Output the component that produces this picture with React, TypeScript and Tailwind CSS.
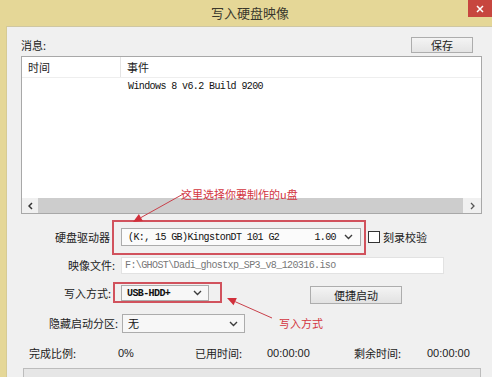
const sans = "font-['Noto_Sans_CJK_SC','Noto_Sans',sans-serif]";
const mono = "font-['Liberation_Mono','Noto_Sans_CJK_SC',monospace] text-[10px] tracking-[-0.6px]";

function Chevron() {
  return (
    <svg width="9" height="6" viewBox="0 0 9 6" className="shrink-0">
      <path d="M1 1 L4.5 4.5 L8 1" fill="none" stroke="#3c3c3c" strokeWidth="1.4" />
    </svg>
  );
}

function Label({ children, className = 'w-[108px]' }: { children: React.ReactNode; className?: string }) {
  return (
    <div className={`shrink-0 text-right text-[11px] text-[#222] leading-none ${className}`}>
      {children}
    </div>
  );
}

export default function App() {
  return (
    <div className={`relative w-[492px] h-[377px] overflow-hidden bg-[#e5d797] flex flex-col ${sans}`}>
      {/* Title bar */}
      <div className="relative h-[26px] shrink-0 flex items-center justify-center">
        <span className="text-[13px] text-[#3a382c] ml-[8px]">写入硬盘映像</span>
        <div className="absolute right-0 top-0 w-[24px] h-[17px] bg-[#c7463f] flex items-center justify-center">
          <svg width="8" height="8" viewBox="0 0 8 8">
            <path d="M1 1 L7 7 M7 1 L1 7" stroke="#fff" strokeWidth="1.5" />
          </svg>
        </div>
      </div>

      <div className="flex-1 flex">
        <div className="w-[7px] shrink-0 border-r border-[#d6cb95]" />
        <div className="flex-1 bg-[#f0f0f0] flex flex-col border-t border-[#cfc7a2]">
          {/* Top row */}
          <div className="flex items-center mt-[10px] pl-[14px] pr-[19px] h-[16px]">
            <span className="text-[11px] text-[#222]">消息:</span>
            <button className="ml-auto w-[62px] h-[16px] border border-[#adadad] bg-gradient-to-b from-[#f4f4f4] to-[#e4e4e4] text-[11px] leading-none text-[#222]">
              保存
            </button>
          </div>

          {/* Message list */}
          <div className="mt-[3px] ml-[14px] w-[461px] h-[158px] border border-[#a8a8a8] bg-white flex flex-col">
            <div className="h-[21px] flex border-b border-[#eeeeee] text-[11px] text-[#222]">
              <div className="w-[99px] pl-[6px] flex items-center border-r border-[#e4e4e4]">时间</div>
              <div className="pl-[6px] flex items-center">事件</div>
            </div>
            <div className="h-[16px] flex items-center">
              <div className="w-[99px]" />
              <div className={`pl-[7px] text-[#111] ${mono}`}>Windows 8 v6.2 Build 9200</div>
            </div>
            <div className="flex-1" />
            <div className="h-[15px] flex bg-[#f0f0f0]">
              <div className="w-[16px] flex items-center justify-center">
                <svg width="5" height="8" viewBox="0 0 5 8">
                  <path d="M4 1 L1 4 L4 7" fill="none" stroke="#333" strokeWidth="1.5" />
                </svg>
              </div>
              <div className="flex-1 bg-[#cdcdcd]" />
              <div className="w-[18px] flex items-center justify-center">
                <svg width="5" height="8" viewBox="0 0 5 8">
                  <path d="M1 1 L4 4 L1 7" fill="none" stroke="#555" strokeWidth="1.3" />
                </svg>
              </div>
            </div>
          </div>

          {/* Drive row */}
          <div className="flex items-center mt-[14px] h-[18px]">
            <Label className="w-[103px]">硬盘驱动器</Label>
            <div className="ml-[11px] w-[240px] h-[18px] border border-[#acacac] bg-[#fbfbfb] flex items-center pl-[6px] pr-[7px]">
              <span className={`text-[#111] ${mono}`}>(K:, 15 GB)KingstonDT 101 G2</span>
              <span className={`ml-auto mr-[8px] text-[#111] ${mono}`}>1.00</span>
              <Chevron />
            </div>
            <div className="ml-[7px] w-[12px] h-[12px] border border-[#333] bg-white" />
            <span className="ml-[3px] text-[11px] text-[#222]">刻录校验</span>
          </div>

          {/* Image file row */}
          <div className="flex items-center mt-[11px] h-[17px]">
            <Label>映像文件:</Label>
            <div className="ml-[6px] w-[323px] h-[17px] border border-[#e2e2e2] bg-white flex items-center pl-[3px]">
              <span className={`text-[#777] ${mono}`}>F:\GHOST\Dadi_ghostxp_SP3_v8_120316.iso</span>
            </div>
          </div>

          {/* Write mode row */}
          <div className="flex items-start mt-[11px] h-[19px]">
            <Label className="w-[104px] mt-[3px]">写入方式:</Label>
            <div className="ml-[10px] w-[88px] h-[16px] border border-[#acacac] bg-[#f7f7f7] flex items-center pl-[5px] pr-[6px]">
              <span className={`text-[#111] font-bold ${mono}`}>USB-HDD+</span>
              <span className="ml-auto">
                <Chevron />
              </span>
            </div>
            <button className="ml-[101px] mt-[1px] w-[92px] h-[18px] border border-[#adadad] bg-gradient-to-b from-[#f4f4f4] to-[#e2e2e2] text-[11px] leading-none text-[#222]">
              便捷启动
            </button>
          </div>

          {/* Hidden partition row */}
          <div className="flex items-center mt-[10px] h-[19px]">
            <Label className="w-[111px]">隐藏启动分区:</Label>
            <div className="ml-[4px] w-[123px] h-[19px] border border-[#acacac] bg-[#f7f7f7] flex items-center pl-[5px] pr-[6px]">
              <span className="text-[11px] text-[#111]">无</span>
              <span className="ml-auto">
                <Chevron />
              </span>
            </div>
          </div>

          {/* Stats */}
          <div className="flex items-center mt-[13px] h-[14px] pl-[22px] text-[11px] text-[#222]">
            <span className="w-[89px]">完成比例:</span>
            <span className="w-[77px] font-['Liberation_Sans',sans-serif]">0%</span>
            <span className="w-[72px]">已用时间:</span>
            <span className="w-[87px] font-['Liberation_Sans',sans-serif]">00:00:00</span>
            <span className="w-[73px]">剩余时间:</span>
            <span className="font-['Liberation_Sans',sans-serif]">00:00:00</span>
          </div>

          {/* Progress bar */}
          <div className="mt-[8px] ml-[16px] w-[458px] h-[20px] border border-[#bcbcbc] bg-[#e6e6e6]" />
        </div>
      </div>

      {/* Red annotations */}
      <div className="absolute left-[112px] top-[220px] w-[254px] h-[35px] border-2 border-[#d1525d]" />
      <div className="absolute left-[113px] top-[282px] w-[109px] h-[21px] border-2 border-[#d1525d]" />
      <span className="absolute left-[181px] top-[186px] text-[11px] text-[#d3363f]">这里选择你要制作的u盘</span>
      <span className="absolute left-[279px] top-[315px] text-[11px] text-[#d3363f]">写入方式</span>
      <svg className="absolute left-0 top-0 pointer-events-none" width="492" height="377">
        <line x1="185" y1="193" x2="140.9" y2="217.6" stroke="#c9404a" strokeWidth="1" />
        <polygon points="133,222 142.8,221.1 138.9,214.1" fill="#d1303b" />
        <line x1="272" y1="318" x2="235.2" y2="301.7" stroke="#c9404a" strokeWidth="1" />
        <polygon points="227,298 236.8,298 233.6,305.3" fill="#d1303b" />
      </svg>
    </div>
  );
}
